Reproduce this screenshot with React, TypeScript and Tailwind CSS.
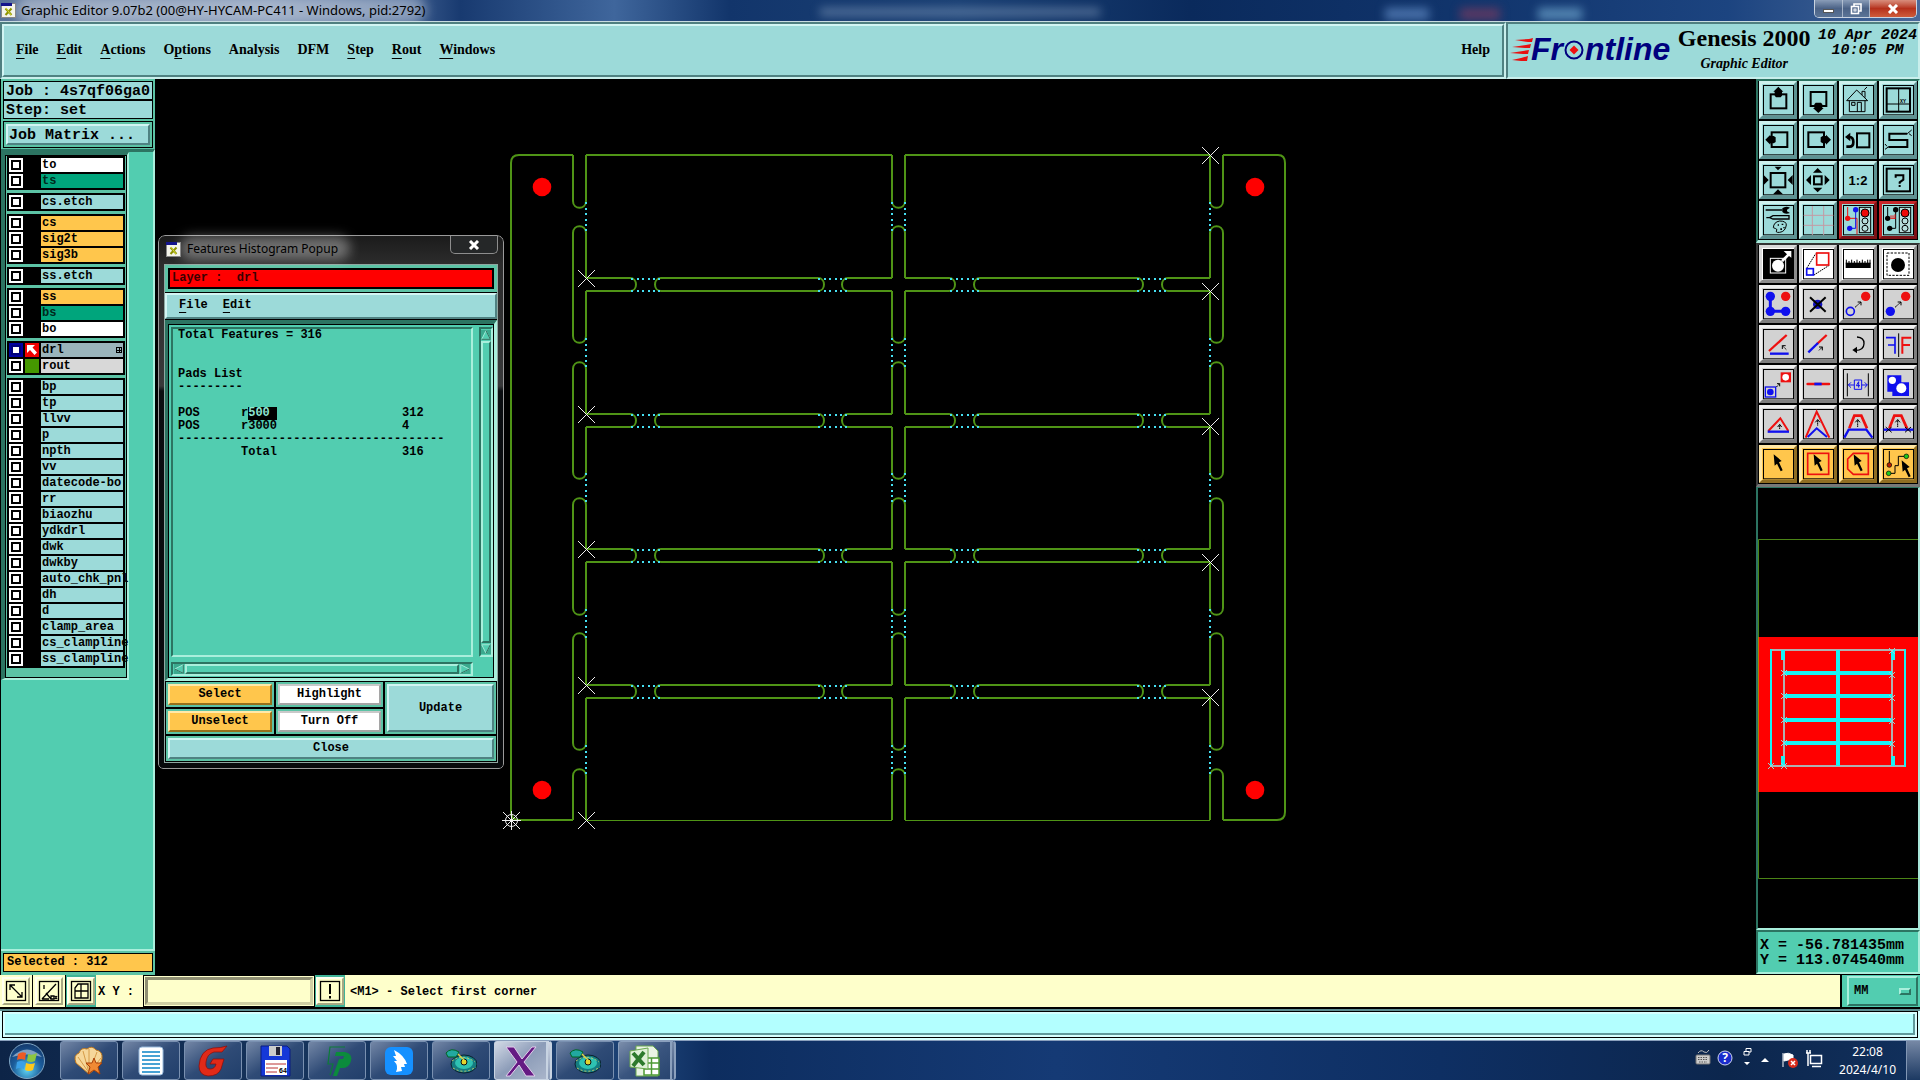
import React from "react";

const MONO = "font-['Liberation_Mono',monospace]";
const SERIF = "font-['Liberation_Serif',serif]";
const SANS = "font-['Noto_Sans',sans-serif]";

/* ---------- bevel styles ---------- */
const CYAN_UP = "border-2 border-t-[#d2f5f3] border-l-[#d2f5f3] border-r-[#4f8282] border-b-[#4f8282] bg-[#9cdad9]";
const GREEN_UP = "border-2 border-t-[#a9efdc] border-l-[#a9efdc] border-r-[#2c7462] border-b-[#2c7462] bg-[#52cdb0]";
const GREEN_DOWN = "border-2 border-t-[#2c7462] border-l-[#2c7462] border-r-[#a9efdc] border-b-[#a9efdc] bg-[#52cdb0]";

/* ---------- top ---------- */
function AppGlyph() {
  return (
    <svg viewBox="0 0 15 15" className="h-[15px] w-[15px] shrink-0">
      <rect x="0.5" y="0.5" width="14" height="14" fill="#f4f4ea" stroke="#888" />
      <rect x="0" y="0" width="11" height="3" fill="#14148c" />
      <path d="M4.500 5.500 L10.500 12 M10.500 5.500 L4.500 12" stroke="#8d9400" strokeWidth="2" />
      <path d="M5 5 L10 12" stroke="#e6e640" strokeWidth="0.8" />
    </svg>
  );
}

function TitleBar() {
  return (
    <div className="relative flex h-[22px] items-start overflow-hidden border-b border-[#c8dbe0] bg-[linear-gradient(90deg,#5a7399_0%,#6e86ab_14%,#3f5f90_21%,#183a70_24%,#3f669c_32%,#12356b_38%,#1b4175_50%,#0a2a5c_62%,#12366e_78%,#1c4480_90%,#49699a_100%)]">
      <div className="absolute -top-1 left-4 h-7 w-[410px] rounded-full bg-white/40 blur-[6px]" />
      <div className="absolute top-2 left-[820px] h-2 w-[280px] bg-[#9eb3cf]/45 blur-[5px]" />
      <div className="absolute top-2 left-[1385px] h-3 w-[44px] bg-[#6f9bd6]/60 blur-[5px]" />
      <div className="absolute top-2 left-[1460px] h-3 w-[40px] bg-[#7a3a60]/70 blur-[5px]" />
      <div className="absolute top-2 left-[1538px] h-3 w-[44px] bg-[#6fa6cf]/70 blur-[5px]" />
      <div className="relative flex h-5 items-center gap-[5px] pl-px">
        <AppGlyph />
        <h1 className={`${SANS} text-[13px] leading-4 whitespace-nowrap text-black`}>
          Graphic Editor 9.07b2 (00@HY-HYCAM-PC411 - Windows, pid:2792)
        </h1>
      </div>
      <div className="relative mr-[3px] ml-auto flex h-[18px] overflow-hidden rounded-b-[5px] border border-t-0 border-[#c9d3e0]">
        <button aria-label="Minimize" className="flex w-7 items-center justify-center border-r border-[#c9d3e0]/70 bg-gradient-to-b from-[#8a9db8] via-[#4b6286] to-[#5b7496]">
          <span className="mt-1 h-[4px] w-[11px] border border-[#555] bg-white" />
        </button>
        <button aria-label="Restore" className="flex w-[27px] items-center justify-center border-r border-[#c9d3e0]/70 bg-gradient-to-b from-[#8a9db8] via-[#4b6286] to-[#5b7496]">
          <svg viewBox="0 0 12 12" className="h-3 w-3" fill="none" stroke="#fff" strokeWidth="1.6">
            <path d="M4 3 V1 H11 V8 H9" />
            <rect x="1.500" y="3.500" width="7" height="7" />
            <rect x="4" y="6" width="2" height="2" strokeWidth="1" />
          </svg>
        </button>
        <button aria-label="Close window" className="flex w-[46px] items-center justify-center bg-gradient-to-b from-[#d88d7c] via-[#b5301b] to-[#cf5b3a]">
          <svg viewBox="0 0 12 10" className="h-[10px] w-3" stroke="#fff" strokeWidth="3">
            <path d="M2 1 L10 9 M10 1 L2 9" />
          </svg>
        </button>
      </div>
    </div>
  );
}

const MENUS: [string, string, string][] = [
  ["", "F", "ile"],
  ["", "E", "dit"],
  ["", "A", "ctions"],
  ["O", "p", "tions"],
  ["Analysis", "", ""],
  ["DFM", "", ""],
  ["", "S", "tep"],
  ["", "R", "out"],
  ["", "W", "indows"],
];

function MenuLabel({ parts }: { parts: [string, string, string] }) {
  return (
    <>
      {parts[0]}
      <span className="underline decoration-1 underline-offset-[4px]">{parts[1]}</span>
      {parts[2]}
    </>
  );
}

function Logo() {
  return (
    <div className="flex items-center text-[#00007e]" aria-label="Frontline">
      <svg viewBox="0 0 24 26" className="-mr-[3px] h-[26px] w-6" fill="#e81010">
        <path d="M5 4 L19 3 L23 2 L22 6 L18 6 Z M2 11 L16 9 L21 8 L20 12 L15 12 Z M0 17 L13 15 L19 14 L18 18 L13 18 Z M2 24 L11 22 L18 20 L17 25 L11 25 Z" />
      </svg>
      <div className="flex items-baseline font-['Liberation_Sans',sans-serif] text-[32px] leading-8 font-bold italic">
        <span>Fr</span>
        <svg viewBox="0 0 20 20" className="mx-px -mb-[2px] h-5 w-5">
          <circle cx="10" cy="10" r="8.500" fill="none" stroke="#00007e" strokeWidth="2" />
          <path d="M10 5.500 L14.500 10 L10 14.500 L5.500 10 Z" fill="#f01010" />
        </svg>
        <span>ntline</span>
      </div>
    </div>
  );
}

function Header() {
  const outer = "border-2 border-t-[#4f7f80] border-l-[#4f7f80] border-r-[#c9efec] border-b-[#c9efec]";
  const inner = "border-2 border-t-[#d2f5f3] border-l-[#d2f5f3] border-r-[#4f8282] border-b-[#4f8282]";
  return (
    <header className="flex h-[57px] bg-[#9cdad9]">
      <div className={`flex flex-1 ${outer}`}>
        <nav className={`flex flex-1 items-center gap-[18px] pr-3 pb-[2px] pl-3 ${inner} ${SERIF} text-[14px] font-bold`}>
          {MENUS.map((m, i) => (
            <button key={i} className="leading-5">
              <MenuLabel parts={m} />
            </button>
          ))}
          <button className="ml-auto leading-5">Help</button>
        </nav>
      </div>
      <div className={`flex w-[414px] shrink-0 items-start justify-between pr-px pl-[2px] ${outer}`}>
        <div className="pt-[9px]">
          <Logo />
        </div>
        <div className={`${SERIF} flex flex-col items-center font-bold`}>
          <span className="text-[24px] leading-7">Genesis 2000</span>
          <span className="pt-[2px] text-[14px] leading-5 italic">Graphic Editor</span>
        </div>
        <div className={`${MONO} pt-1 text-center text-[15px] leading-[15px] font-bold whitespace-pre italic`}>
          <div>10 Apr 2024</div>
          <div>10:05 PM</div>
        </div>
      </div>
    </header>
  );
}

/* ---------- left sidebar ---------- */
const LAYERS: { name: string; tone: string; kind?: string }[][] = [
  [{ name: "to", tone: "bg-white" }, { name: "ts", tone: "bg-[#00a57c]" }],
  [{ name: "cs.etch", tone: "bg-[#9cdad9]" }],
  [
    { name: "cs", tone: "bg-[#ffc64c]" },
    { name: "sig2t", tone: "bg-[#ffc64c]" },
    { name: "sig3b", tone: "bg-[#ffc64c]" },
  ],
  [{ name: "ss.etch", tone: "bg-[#9cdad9]" }],
  [
    { name: "ss", tone: "bg-[#ffc64c]" },
    { name: "bs", tone: "bg-[#00a57c]" },
    { name: "bo", tone: "bg-white" },
  ],
  [
    { name: "drl", tone: "bg-[#9ab4bb]", kind: "work" },
    { name: "rout", tone: "bg-[#d8d8d8]", kind: "shown" },
  ],
  ["bp", "tp", "llvv", "p", "npth", "vv", "datecode-bo", "rr", "biaozhu", "ydkdrl", "dwk", "dwkby", "auto_chk_pnl", "dh", "d", "clamp_area", "cs_clampline", "ss_clampline"].map((name) => ({
    name,
    tone: "bg-[#9cdad9]",
  })),
];

function LayerRow({ name, tone, kind }: { name: string; tone: string; kind?: string }) {
  return (
    <label className="flex h-4 items-center pt-0.5 pl-0.5">
      <input
        type="checkbox"
        className={
          kind === "work"
            ? "size-[14px] shrink-0 appearance-none border-2 border-[#0000a0] bg-white shadow-[inset_0_0_0_2px_#00007a]"
            : "size-[14px] shrink-0 appearance-none border-2 border-white bg-white shadow-[inset_0_0_0_2px_#000]"
        }
      />
      <span className="mx-0.5 flex size-[14px] shrink-0 items-center justify-center">
        {kind === "work" && (
          <svg viewBox="0 0 14 14" className="size-[14px]">
            <rect width="14" height="14" fill="#f00000" />
            <path d="M2 2 H10 L7.500 4.500 L12 9.500 L9.500 12 L5 7 L2 10 Z" fill="#fff" />
          </svg>
        )}
        {kind === "shown" && <span className="size-[14px] bg-[#459800]" />}
      </span>
      <span className={`${MONO} flex h-[14px] w-[82px] items-center pl-px text-[12px] leading-[14px] font-bold whitespace-nowrap ${tone} ${name === "bs" || name === "ts" ? "text-[#012a1c]" : "text-black"}`}>
        {name}
        {kind === "work" && (
          <svg viewBox="0 0 6 6" className="mr-px ml-auto size-[6px]" shapeRendering="crispEdges">
            <path d="M0.500 0.500 H5.500 V5.500 H0.500 Z M3 0 V6 M0 3 H6" fill="none" stroke="#000" />
          </svg>
        )}
      </span>
    </label>
  );
}

function Sidebar() {
  return (
    <aside className="flex w-[155px] shrink-0 flex-col border-l border-black bg-[#5cc3a5]">
      <div className={`${MONO} px-[2px] pt-[2px] text-[15px] font-bold`}>
        <div className="h-[19px] border border-black bg-[#9cdad9] pl-[2px] leading-[19px] whitespace-nowrap">Job : 4s7qf06ga0</div>
        <div className="h-[19px] border border-black bg-[#9cdad9] pl-[2px] leading-[19px]">Step: set</div>
        <div className="mt-[2px] border border-black p-[2px]">
          <button className={`block h-[21px] w-full pl-px text-left leading-[19px] ${CYAN_UP}`}>Job Matrix ...</button>
        </div>
      </div>
      <div className="mt-px flex flex-1 flex-col items-start border-t-[3px] border-r-2 border-b-2 border-t-[#2c7462] border-r-[#a9efdc] border-b-[#a9efdc] bg-[#52cdb0]">
        <div className="border-t-[3px] border-r-2 border-b-2 border-l-4 border-t-[#2c7462] border-r-[#a9efdc] border-b-[#a9efdc] border-l-[#2c7462]">
          <div className="flex w-[122px] flex-col gap-[3px] border border-black bg-[#5cc3a5] px-px pb-[9px]">
            {LAYERS.map((g, i) => (
              <div key={i} className="w-[118px] bg-black pb-0.5">
                {g.map((l) => (
                  <LayerRow key={l.name} {...l} />
                ))}
              </div>
            ))}
          </div>
        </div>
      </div>
      <div className="px-[2px] pt-[2px] pb-[3px]">
        <div className={`${MONO} h-[19px] border border-black bg-[#ffc64c] pl-[3px] text-[12px] leading-[17px] font-bold`}>Selected : 312</div>
      </div>
    </aside>
  );
}

/* ---------- board drawing ---------- */
const ROWS = [278, 414, 549, 685];
const COL_STARTS = [155, 226, 362, 498, 633, 769];
const COL_ENDS = [208, 343, 479, 615, 750, 820];

function slotPath(): string {
  const d: string[] = [];
  const n = COL_STARTS.length;
  const vertical = (x1: number, x2: number, openL: boolean, openR: boolean) => {
    for (let i = 0; i < n; i++) {
      const top = COL_STARTS[i];
      const bot = COL_ENDS[i];
      const a = i === 0 ? top : top + 7;
      const b = i === n - 1 ? bot : bot - 7;
      const side = (x: number, open: boolean) => {
        const row = i > 0 && i < n - 1 ? ROWS[i - 1] : null;
        if (open && row !== null) d.push(`M${x} ${a} V${row} M${x} ${row + 13} V${b}`);
        else d.push(`M${x} ${a} V${b}`);
      };
      side(x1, openL);
      side(x2, openR);
      if (i > 0) d.push(`M${x1} ${a} C${x1} ${top - 2} ${x2} ${top - 2} ${x2} ${a}`);
      if (i < n - 1) d.push(`M${x1} ${b} C${x1} ${bot + 2} ${x2} ${bot + 2} ${x2} ${b}`);
    }
  };
  vertical(573, 586, false, true);
  vertical(892, 905, true, true);
  vertical(1210, 1223, true, false);
  for (const y of ROWS) {
    for (const [x1, a, b, c, e, x2] of [
      [586, 636, 655, 824, 842, 892],
      [905, 955, 974, 1143, 1162, 1210],
    ]) {
      const y2 = y + 13;
      d.push(`M${x1} ${y} H${a - 6} C${a + 2} ${y} ${a + 2} ${y2} ${a - 6} ${y2} H${x1}`);
      d.push(`M${b + 6} ${y} H${c - 6} C${c + 2} ${y} ${c + 2} ${y2} ${c - 6} ${y2} H${b + 6} C${b - 2} ${y2} ${b - 2} ${y} ${b + 6} ${y}`);
      d.push(`M${x2} ${y} H${e + 6} C${e - 2} ${y} ${e - 2} ${y2} ${e + 6} ${y2} H${x2}`);
    }
  }
  return d.join(" ");
}

function dotList(): [number, number][] {
  const out: [number, number][] = [];
  const steps = [-14, -8, -3, 3, 8, 13];
  for (const cy of [217, 353, 488, 624, 760]) for (const x of [586, 892, 905, 1210]) for (const s of steps) out.push([x, cy + s]);
  for (const y of ROWS) for (const cx of [646, 833, 965, 1152]) for (const s of steps) out.push([cx + s, y + 1], [cx + s, y + 13]);
  return out;
}

const CROSSES = [
  [586, 278], [586, 414], [586, 549], [586, 685], [586, 820], [511, 820],
  [1210, 155], [1210, 291], [1210, 426], [1210, 562], [1210, 697],
];

function Board() {
  return (
    <svg viewBox="155 79 1602 896" className="h-[896px] w-[1602px] max-w-none" role="img" aria-label="Board outline">
      <g fill="none" stroke="#4f9416" strokeWidth="2">
        <path d={slotPath()} />
        <path d="M573 155 H519 Q511 155 511 163 V812 Q511 820 519 820 H573 M586 155 H892 M905 155 H1210 M1223 155 H1278 Q1285 155 1285 163 V812 Q1285 820 1277 820 H1223" />
        <path d="M586 820.500 H892 M905 820.500 H1210" strokeWidth="1" />
      </g>
      <g fill="#46e0f2">
        {dotList().map(([x, y], i) => (
          <rect key={i} x={x - 1} y={y - 1} width="2" height="2" />
        ))}
      </g>
      <g fill="#ff0000">
        {[[542, 187], [1255, 187], [542, 790], [1255, 790]].map(([x, y]) => (
          <circle key={`${x}-${y}`} cx={x} cy={y} r="9.300" />
        ))}
      </g>
      <g stroke="#f0f0f0" strokeWidth="1" fill="none">
        {CROSSES.map(([x, y]) => (
          <path key={`${x}-${y}`} d={`M${x - 8} ${y - 8} L${x + 9} ${y + 9} M${x + 9} ${y - 8} L${x - 8} ${y + 9}`} />
        ))}
        <circle cx="511.500" cy="820.500" r="6" />
        <path d="M502 820.500 H521 M511.500 811 V830" />
      </g>
    </svg>
  );
}

/* ---------- popup ---------- */
function Arrow({ dir }: { dir: "up" | "down" | "left" | "right" }) {
  const pts = { up: "7,1 13,13 1,13", down: "1,1 13,1 7,13", left: "1,7 13,1 13,13", right: "13,7 1,1 1,13" }[dir];
  return (
    <svg viewBox="0 0 14 14" className="h-full w-full" aria-hidden="true">
      <rect width="14" height="14" fill="#3ba98e" />
      <polygon points={pts} fill="#52cdb0" stroke="#a9efdc" strokeWidth="1.300" />
      <path d={dir === "up" ? "M1 13 H13 L7 1" : dir === "down" ? "M13 1 L7 13" : dir === "left" ? "M1 7 L13 13 V1" : "M13 7 L1 13"} fill="none" stroke="#236353" strokeWidth="1.300" />
    </svg>
  );
}

function PopupButton({ tone, children, tall }: { tone: "orange" | "white" | "cyan"; children: React.ReactNode; tall?: boolean }) {
  const tones = {
    orange: "border-t-[#ffe9a8] border-l-[#ffe9a8] border-r-[#97701a] border-b-[#97701a] bg-[#ffc64c]",
    white: "border-t-[#c9c9c9] border-l-[#c9c9c9] border-r-[#a5a5a5] border-b-[#a5a5a5] bg-white",
    cyan: "border-t-[#d2f5f3] border-l-[#d2f5f3] border-r-[#4f8282] border-b-[#4f8282] bg-[#9cdad9]",
  };
  return (
    <div className={`border border-black bg-[#5cc3a5] p-[2px] ${tall ? "row-span-2" : ""}`}>
      <button className={`block h-full min-h-[21px] w-full border-2 text-[12px] leading-[17px] font-bold ${tones[tone]}`}>{children}</button>
    </div>
  );
}

function Popup() {
  return (
    <section aria-label="Features Histogram Popup" className="absolute top-[156px] left-[3px] w-[346px] rounded-t-[7px] rounded-b-[5px] border border-[#9a9a9a] bg-[linear-gradient(180deg,#1b1b1b_0,#2c2c2c_28px,#38393a_150px,#0a0d10_155px,#080a0c_100%)] px-[5px] pb-[5px] outline outline-1 outline-black">
      <div className="relative flex h-[28px] items-start pt-[5px] pl-[2px]">
        <div className="absolute top-0 left-4 h-6 w-[170px] rounded-full bg-white/35 blur-[6px]" />
        <div className="relative flex items-center gap-[6px]">
          <AppGlyph />
          <h2 className={`${SANS} text-[12px] leading-4 text-black`}>Features Histogram Popup</h2>
        </div>
        <button aria-label="Close popup" className="absolute top-0 right-0 flex h-[18px] w-[48px] items-center justify-center rounded-b-[5px] border border-t-0 border-[#8d8d8d] bg-[#252728]">
          <svg viewBox="0 0 12 10" className="h-[10px] w-3" stroke="#fff" strokeWidth="3">
            <path d="M2 1 L10 9 M10 1 L2 9" />
          </svg>
        </button>
      </div>
      <div className={`${MONO} border border-[#8fa7a1] bg-black`}>
        <div className="bg-[#5cc3a5] p-[3px]">
          <div className="h-[21px] border-2 border-black bg-[#ff0000] pl-[2px] text-[12px] leading-[17px] font-bold whitespace-pre text-[#3a0000]">Layer :  drl</div>
        </div>
        <div className={`mt-px flex h-[26px] items-center gap-[15px] pb-[2px] pl-3 text-[12px] font-bold ${CYAN_UP}`}>
          <button><MenuLabel parts={["", "F", "ile"]} /></button>
          <button><MenuLabel parts={["", "E", "dit"]} /></button>
        </div>
        <div className="mt-px border-t-4 border-r-[3px] border-b-[3px] border-l-[3px] border-t-[#2c7462] border-r-[#a9efdc] border-b-[#a9efdc] border-l-[#2c7462] bg-[#52cdb0]">
          <div className="grid grid-cols-[1fr_14px] grid-rows-[330px_14px] gap-x-[6px] gap-y-[5px] border border-black pt-[2px] pb-px pl-[2px]">
            <div className={`${GREEN_DOWN} pl-[5px] text-[12px] leading-[13px] font-bold`}>
              <table className="w-full table-fixed border-collapse">
                <caption className="h-[65px] text-left whitespace-pre">{"Total Features = 316\n\n\nPads List\n---------"}</caption>
                <colgroup>
                  <col className="w-[63px]" />
                  <col className="w-[161px]" />
                  <col />
                </colgroup>
                <tbody>
                  <tr className="h-[13px]"><td /></tr>
                  <tr>
                    <td>POS</td>
                    <td>r<span className="inline-block h-[13px] w-[29px] bg-black text-[#8fe6d2]">500</span></td>
                    <td>312</td>
                  </tr>
                  <tr><td>POS</td><td>r3000</td><td>4</td></tr>
                  <tr><td colSpan={3} className="overflow-hidden whitespace-nowrap">-------------------------------------</td></tr>
                  <tr><td /><td>Total</td><td>316</td></tr>
                </tbody>
              </table>
            </div>
            <div className={`flex flex-col ${GREEN_DOWN}`}>
              <div className="h-[12px]"><Arrow dir="up" /></div>
              <div className={`flex-1 ${GREEN_UP}`} />
              <div className="h-[12px]"><Arrow dir="down" /></div>
            </div>
            <div className={`flex ${GREEN_DOWN}`}>
              <div className="w-[12px]"><Arrow dir="left" /></div>
              <div className={`flex-1 ${GREEN_UP}`} />
              <div className="w-[12px]"><Arrow dir="right" /></div>
            </div>
          </div>
        </div>
        <div className="grid grid-cols-[110px_109px_1fr]">
          <PopupButton tone="orange">Select</PopupButton>
          <PopupButton tone="white">Highlight</PopupButton>
          <PopupButton tone="cyan" tall>Update</PopupButton>
          <PopupButton tone="orange">Unselect</PopupButton>
          <PopupButton tone="white">Turn Off</PopupButton>
        </div>
        <PopupButton tone="cyan">Close</PopupButton>
      </div>
    </section>
  );
}

/* ---------- toolbar icons (114-unit grid) ---------- */
const K = { fill: "none", stroke: "#000", strokeWidth: 6 } as const;
const R = { fill: "none", stroke: "#ee1010", strokeWidth: 6 } as const;
const B = { fill: "none", stroke: "#1010ee", strokeWidth: 6 } as const;
const Pointer = ({ x = 0, y = 0 }: { x?: number; y?: number }) => (
  <path transform={`translate(${x} ${y})`} d="M44 28 L68 48 L60 52 L71 76 L65 79 L54 56 L47 62 Z" fill="#000" />
);
const SmallArrow = ({ d, head }: { d: string; head: string }) => (
  <g fill="none" stroke="#000" strokeWidth="3">
    <path d={d} strokeDasharray="4 1" />
    <path d={head} />
  </g>
);
const Light = ({ x }: { x: number }) => (
  <g stroke="#000" strokeWidth="3">
    <rect x={x} y="19" width="34" height="76" fill="#b9dedd" />
    <circle cx={x + 17} cy="36" r="12" fill="#f00808" />
    <circle cx={x + 17} cy="60" r="9" fill="none" />
    <circle cx={x + 17} cy="82" r="9" fill="none" />
  </g>
);

const NAV_ICONS: [string, React.ReactNode][] = [
  ["Page up", <><rect x="35" y="40" width="47" height="42" {...K} /><path d="M58 17 L73 32 H69 V44 L65 49 H51 L47 44 V32 H43 Z" /></>],
  ["Page down", <><rect x="35" y="33" width="47" height="42" {...K} /><path d="M58 96 L42 81 H46 V70 L50 65 H66 L70 70 V81 H74 Z" /></>],
  ["Home", <><path d="M23 59 L53 27 L86 59 Z M31 59 V92 H78 V59 M38 64 H48 V73 H38 Z M55 92 V64 H67 V92 M69 42 V31 H78 V50 M76 26 L84 18" {...K} strokeWidth="3" /></>],
  ["Origin", <><rect x="23" y="22" width="70" height="70" {...K} /><path d="M59 22 V92 M23 69 H93" {...K} strokeWidth="3" /><text x="63" y="67" fontSize="15" fontFamily="Liberation Mono, monospace" fontWeight="700">XY</text></>],
  ["Pan left", <><rect x="38" y="34" width="47" height="44" {...K} /><path d="M19 56 L34 41 V45 H44 L50 49 V63 L44 67 H34 V71 Z" /></>],
  ["Pan right", <><rect x="28" y="34" width="47" height="44" {...K} /><path d="M96 56 L81 41 V45 H71 L65 49 V63 L71 67 H81 V71 Z" /></>],
  ["Previous view", <><rect x="54" y="37" width="37" height="42" {...K} /><path d="M22 77 H32 Q43 77 43 63 Q43 49 32 48 H26" {...K} strokeWidth="8" /><path d="M18 48 L34 35 V61 Z" /></>],
  ["Path", <><path d="M85 38 H31 V57 H85 V78 H28" {...K} /><path d="M85 38 L98 27 M90 38 L98 44 M28 78 L18 85 M24 76 L18 69" {...K} strokeWidth="3" /></>],
  ["Zoom out", <><rect x="35" y="36" width="44" height="43" {...K} /><path d="M47 17 H68 L57 28 Z M57 85 L72 100 H42 Z M14 42 L29 57 L14 72 Z M101 42 L86 57 L101 72 Z" /></>],
  ["Zoom in", <><rect x="45" y="46" width="23" height="24" {...K} /><path d="M56 21 L70 35 H42 Z M42 80 H70 L56 94 Z M21 57 L36 42 V72 Z M92 57 L77 42 V72 Z" /></>],
  ["Scale one to two", <text x="57" y="72" textAnchor="middle" fontSize="39" fontFamily="Liberation Sans, sans-serif" fontWeight="700">1:2</text>],
  ["Help on tool", <><rect x="23" y="23" width="70" height="68" {...K} /><path d="M50 50 V43 H73 V56 L62 64 V68 M62 72 V78" {...K} /></>],
  ["Settings", <><path d="M20 27 H70 M22 50 H32 L42 44 H90 V54 H42 L32 50" {...K} strokeWidth="4" /><path d="M70 22 Q80 13 93 20 L84 26 V31 L93 36 Q78 42 70 33 Z" /><path d="M43 80 Q44 63 62 60 Q82 60 82 72 Q79 92 62 94 Q47 96 54 86 Q50 82 43 80 Z" {...K} strokeWidth="3" /><path d="M56 70 h4 v4 h-4 z M68 68 h5 v4 h-5 z M64 82 h5 v5 h-5 z M73 78 h4 v4 h-4 z" /></>],
  ["Grid", <path d="M40 15 V102 M74 15 V102 M14 43 H103 M14 73 H103" fill="none" stroke="#c49aa4" strokeWidth="3" />],
  ["Net display", <><path d="M26 18 V52 H54 V100" {...R} strokeWidth="3" /><path d="M50 26 V82 H32" {...B} strokeWidth="3" /><circle cx="50" cy="26" r="8" fill="#1010ee" /><circle cx="32" cy="82" r="8" fill="#1010ee" /><circle cx="26" cy="52" r="8" fill="#ee1010" /><Light x={61} /></>],
  ["Net check", <><path d="M26 18 V52 M50 26 V82 H32" {...K} strokeWidth="3" /><circle cx="50" cy="26" r="8" /><circle cx="32" cy="82" r="8" /><circle cx="26" cy="52" r="8" /><path d="M34 52 H48 M36 43 V50 M42 43 V50 M48 40 V54" {...R} strokeWidth="3" /><Light x={61} /></>],
];

const EDIT_ICONS: [string, React.ReactNode][] = [
  ["Feature", <><rect x="14" y="15" width="89" height="87" /><rect x="34" y="40" width="46" height="44" fill="#000" stroke="#fff" strokeWidth="3" /><circle cx="57" cy="62" r="18" fill="#fff" /><path d="M66 46 L84 28 L74 18 H97 V38 L90 33 L72 51 Z" fill="#fff" /></>],
  ["Scale feature", <><path d="M23 70 L50 26 M45 90 L92 60" {...K} strokeWidth="3" strokeDasharray="5 2" /><rect x="53" y="24" width="36" height="36" {...R} strokeWidth="5" /><rect x="23" y="71" width="20" height="19" {...B} strokeWidth="5" /></>],
  ["Measure", <><path d="M20 53 H95 V69 H20 Z" /><path d="M22 56 V44 M30 56 V48 M38 56 V44 M46 56 V48 M54 56 V44 M62 56 V48 M70 56 V44 M78 56 V48 M86 56 V44 M93 56 V44" {...K} strokeWidth="3" /></>],
  ["Pad select", <><rect x="24" y="24" width="66" height="67" {...K} strokeWidth="3" strokeDasharray="7 4" /><circle cx="57" cy="60" r="21" /></>],
  ["Connect", <><path d="M34 36 V79 H80" {...B} strokeWidth="9" /><circle cx="34" cy="34" r="14" fill="#1010ee" /><circle cx="34" cy="79" r="14" fill="#1010ee" /><circle cx="80" cy="79" r="14" fill="#1010ee" /><circle cx="80" cy="34" r="14" fill="#ee1010" /></>],
  ["Delete", <><circle cx="56" cy="58" r="14" fill="#1010c0" /><path d="M33 37 L80 80 M80 37 L33 80" {...K} strokeWidth="6" /></>],
  ["Move", <><circle cx="80" cy="34" r="14" fill="#ee1010" /><circle cx="34" cy="79" r="12" {...B} strokeWidth="5" /><SmallArrow d="M48 67 L66 51" head="M56 51 H66 V61" /></>],
  ["Copy", <><circle cx="80" cy="34" r="14" fill="#ee1010" /><circle cx="34" cy="79" r="14" fill="#1010ee" /><SmallArrow d="M48 67 L66 51" head="M56 51 H66 V61" /></>],
  ["Rotate line", <><path d="M30 78 L83 30" {...R} strokeWidth="7" /><path d="M33 86 H89" {...B} strokeWidth="7" /><SmallArrow d="M82 74 L70 62" head="M70 72 V62 H80" /></>],
  ["Extend line", <><path d="M54 57 L83 30" {...R} strokeWidth="7" /><path d="M28 82 L57 54" {...B} strokeWidth="7" /><SmallArrow d="M60 76 L70 66" head="M60 66 H70 V76" /></>],
  ["Rotate", <><path d="M54 36 Q76 38 75 56 Q74 76 50 76" {...K} strokeWidth="4" /><path d="M40 75 L54 65 V85 Z" /></>],
  ["Mirror", <><path d="M21 38 H48 V86 M27 60 H48" {...B} strokeWidth="5" /><path d="M97 38 H70 V86 M70 60 H93" {...R} strokeWidth="6" /><path d="M59 25 V96" {...K} strokeWidth="3" /></>],
  ["Change symbol", <><rect x="65" y="22" width="31" height="30" fill="#ee1010" /><circle cx="80" cy="37" r="10" fill="#fff" /><rect x="19" y="66" width="31" height="30" fill="none" stroke="#1010ee" strokeWidth="4" /><circle cx="34" cy="81" r="10" fill="#1010ee" /><SmallArrow d="M52 66 L62 56" head="M54 56 H62 V64" /></>],
  ["Break", <><path d="M26 57 H90" {...R} strokeWidth="8" strokeLinecap="round" /><path d="M46 57 H68" {...B} strokeWidth="8" /></>],
  ["Spacing", <><path d="M25 25 V94 M88 25 V94" {...K} strokeWidth="3" /><path d="M28 60 H45 M68 60 H85 M36 52 L28 60 L36 68 M77 52 L85 60 L77 68 M46 45 H68 V73 H46 Z" {...B} strokeWidth="3" /><path d="M59 68 V50 L52 62 H63" {...B} strokeWidth="3" /></>],
  ["Merge", <><path d="M25 31 H67 V52 H90 V93 H40 V80 H25 Z" fill="#1010ee" /><circle cx="40" cy="46" r="11" fill="#fff" /><circle cx="67" cy="70" r="15" fill="#fff" /></>],
  ["Triangle", <><path d="M28 78 L64 40 L88 78" {...R} /><path d="M26 80 H90" {...B} strokeWidth="7" /><SmallArrow d="M62 72 V60" head="M56 66 L62 58 L68 66" /></>],
  ["Tall triangle", <><path d="M20 98 L53 20 L91 98" {...R} /><path d="M26 96 L53 70 L84 96" {...B} /><SmallArrow d="M56 62 V44" head="M49 52 L56 44 L63 52" /></>],
  ["Trapezoid", <><path d="M31 70 L46 32 H67 L84 70" {...R} strokeWidth="8" /><path d="M16 98 L29 74 H82 L100 98" {...B} strokeWidth="7" /><SmallArrow d="M56 66 V44" head="M49 52 L56 44 L63 52" /></>],
  ["Trapezoid cut", <><path d="M31 70 L46 32 H67 L84 70" {...R} strokeWidth="8" /><path d="M14 74 H103" {...B} strokeWidth="7" /><path d="M20 66 L38 82 M38 66 L20 82 M78 66 L96 82 M96 66 L78 82" {...K} strokeWidth="3" /><SmallArrow d="M56 66 V44" head="M49 52 L56 44 L63 52" /></>],
];

const SELECT_ICONS: [string, React.ReactNode][] = [
  ["Select", <Pointer />],
  ["Select rectangle", <><rect x="26" y="25" width="63" height="63" {...R} strokeWidth="5" /><Pointer /></>],
  ["Select polygon", <><path d="M43 25 H88 V88 H43 L26 72 V42 Z" {...R} strokeWidth="5" /><Pointer /></>],
  ["Select net", <><path d="M31 18 V60 M28 85 H48 V62 H58 V34 H82" {...K} strokeWidth="3" /><circle cx="31" cy="60" r="7" fill="#b52000" stroke="#000" strokeWidth="2" /><circle cx="29" cy="85" r="7" fill="#1cc81c" stroke="#000" strokeWidth="2" /><circle cx="82" cy="34" r="7" fill="#1cc81c" stroke="#000" strokeWidth="2" /><Pointer x={24} y={18} /></>],
];

const TOOL_TONES = {
  cyan: "border-t-[#cdf1ee] border-l-[#cdf1ee] border-r-[#5d9292] border-b-[#5d9292] bg-[#9cdad9]",
  red: "border-t-[#c8262a] border-l-[#c8262a] border-r-[#7e1216] border-b-[#7e1216] bg-[#9cdad9]",
  white: "border-t-[#d9d9d9] border-l-[#d9d9d9] border-r-[#8b8b8b] border-b-[#8b8b8b] bg-white",
  gray: "border-t-[#f0f0f0] border-l-[#f0f0f0] border-r-[#7e7e7e] border-b-[#7e7e7e] bg-[#d2d2d2]",
  orange: "border-t-[#ffe7a6] border-l-[#ffe7a6] border-r-[#8f6d22] border-b-[#8f6d22] bg-[#ffc64c]",
};

function Tool({ label, tone, children }: { label: string; tone: keyof typeof TOOL_TONES; children: React.ReactNode }) {
  return (
    <button aria-label={label} title={label} className={`size-[38px] border-[3px] ${TOOL_TONES[tone]}`}>
      <svg viewBox="9 9 96 96" className="size-8" aria-hidden="true">
        <rect x="13.500" y="13.500" width="90" height="88" fill="none" stroke="#000" strokeWidth="3" />
        {children}
      </svg>
    </button>
  );
}

/* ---------- overview ---------- */
function Overview() {
  const marks = [
    [98, 673], [98, 696], [98, 720], [98, 743], [98, 766], [85, 766],
    [206, 651], [206, 675], [206, 698], [206, 721], [206, 744],
  ];
  return (
    <svg viewBox="1758 488 160 439" className="block w-full flex-1 bg-black" preserveAspectRatio="xMidYMin meet" role="img" aria-label="Overview">
      <path d="M1918 539.500 H1758.500 V878.500 H1918" fill="none" stroke="#4b8416" />
      <rect x="1758" y="637" width="160" height="155" fill="#ff0000" />
      <path d="M1758.500 637 V792" stroke="#b08000" />
      <g stroke="#b0b0b0" strokeWidth="2">
        <path d="M1770 650 H1906 M1770 766 H1906 M1784 650 V766 M1892 650 V766" />
      </g>
      <g stroke="#19f3f5">
        <path d="M1771 649 V767 M1905 649 V767" strokeWidth="2" />
        <path d="M1783 650 V660 M1893 650 V660 M1783 756 V766 M1893 756 V766" strokeWidth="4" />
        <path d="M1838 650 V766 M1784 673 H1892 M1784 696 H1892 M1784 720 H1892 M1784 743 H1892" strokeWidth="4" />
      </g>
      <g stroke="#8fd8d8" strokeWidth="1">
        {marks.map(([x, y]) => (
          <path key={`${x}-${y}`} d={`M${x + 1683} ${y - 3} l6 6 m0 -6 l-6 6`} />
        ))}
      </g>
    </svg>
  );
}

function RightPanel() {
  return (
    <aside className="flex w-[164px] shrink-0 flex-col bg-black">
      <div className="border-t-2 border-r-2 border-b-[3px] border-l-2 border-t-[#2c7462] border-r-[#a9efdc] border-b-[#a9e6da] border-l-[#2c7462]">
        <div className="grid grid-cols-[repeat(4,38px)] gap-[2px] pb-px pl-px">
          {NAV_ICONS.map(([label, icon], i) => (
            <Tool key={label} label={label} tone={i > 13 ? "red" : "cyan"}>{icon}</Tool>
          ))}
        </div>
      </div>
      <div className="border-t-2 border-r-2 border-b-[3px] border-l-2 border-t-[#333] border-r-[#777] border-b-[#777] border-l-[#3c3c3c]">
        <div className="grid grid-cols-[repeat(4,38px)] gap-[2px] pb-px pl-px">
          {EDIT_ICONS.map(([label, icon], i) => (
            <Tool key={label} label={label} tone={i < 4 ? "white" : "gray"}>{icon}</Tool>
          ))}
          {SELECT_ICONS.map(([label, icon]) => (
            <Tool key={label} label={label} tone="orange">{icon}</Tool>
          ))}
        </div>
      </div>
      <div className="flex flex-1 border-t border-r-2 border-b-2 border-l-2 border-t-[#2c7462] border-r-[#a9e6da] border-b-[#a9efdc] border-l-[#2c7462]">
        <Overview />
      </div>
      <div className={`${MONO} ${GREEN_DOWN} mb-px h-[44px] pt-[6px] pl-[2px] text-[15px] leading-[15px] font-bold whitespace-pre`}>
        <div>X = -56.781435mm</div>
        <div>Y = 113.074540mm</div>
      </div>
    </aside>
  );
}

/* ---------- bottom ---------- */
function SmallTool({ label, children, green }: { label: string; children: React.ReactNode; green?: boolean }) {
  return (
    <div className={`flex items-center justify-center ${green ? "bg-[#3fb497] px-px" : "border-r border-black px-[2px]"}`}>
      <button aria-label={label} className="size-[28px] border-2 border-t-[#fffff0] border-r-[#a8a884] border-b-[#a8a884] border-l-[#fffff0] bg-[#feffcb]">
        <svg viewBox="0 0 24 24" className="size-6" fill="none" stroke="#000" strokeWidth="1.300">
          <rect x="2.500" y="2.500" width="19" height="19" />
          {children}
        </svg>
      </button>
    </div>
  );
}

function StatusBar() {
  return (
    <div className={`${MONO} flex h-[34px] border-b-2 border-black bg-[#feffcb] text-[12px] font-bold`}>
      <SmallTool label="Snap diagonal"><path d="M6 6 L18 18 M6 11 V6 H11 M13 18 H18 V13" /></SmallTool>
      <SmallTool label="Snap angle"><path d="M5 20 L19 5 M5 20 H12 M7 6 V10 M9 14 L14 20 M14 17 h3 v3 h-3 z M18 17 l2 3 M20 17 l-2 3" /></SmallTool>
      <SmallTool label="Snap grid" green><path d="M6 9 L9 5 H19 V19 H6 Z M12 5 V19 M6 12 H19" /></SmallTool>
      <label htmlFor="xy" className="flex items-center pt-px pr-[9px] pl-[2px] leading-4 whitespace-pre">X Y :</label>
      <div className="border border-black p-px">
        <input id="xy" type="text" className="h-full w-[168px] border-[3px] border-t-[#8f8f72] border-r-[#cfcfa4] border-b-[#cfcfa4] border-l-[#8f8f72] bg-[#feffcb] px-1 outline-none" />
      </div>
      <SmallTool label="Attention" green><path d="M12 5 V15 M12 17 V19.500" strokeWidth="2" /></SmallTool>
      <div className="flex flex-1 items-center pt-px pl-[5px] leading-4 whitespace-pre">{"<M1> - Select first corner"}</div>
      <div className="flex w-[80px] border-l-2 border-black bg-[#52cdb0] py-px pr-[2px] pl-[5px]">
        <button className={`flex flex-1 items-center justify-between px-[5px] ${GREEN_UP}`}>
          MM
          <span className={`h-[7px] w-3 ${GREEN_UP}`} />
        </button>
      </div>
    </div>
  );
}

const task: Record<string, React.ReactNode> = {
  Shell: <><path d="M16 29 L3 18 Q0 10 6 8 Q8 2 14 4 Q19 0 23 5 Q30 6 29 14 L27 20 Z" fill="#f6d79a" stroke="#c07a20" /><path d="M16 28 L5 12 M16 28 L10 6 M16 28 L16 4 M16 28 L24 7 M16 28 L28 13" stroke="#d69c48" strokeWidth="1" fill="none" /><path d="M21 13 L23 18 L29 18 L25 22 L27 29 L21 25 L15 29 L17 22 L13 18 L19 18 Z" fill="#f08a34" stroke="#a84008" /></>,
  Notes: <><rect x="4" y="2" width="24" height="28" rx="3" fill="#fff" stroke="#9bd" /><path d="M7 7 H25 M7 11 H25 M7 15 H25 M7 19 H25 M7 23 H25 M7 27 H25" stroke="#0d84c6" strokeWidth="1.700" /></>,
  Gerber: <path d="M30 1 L25 7 H17 Q10 9 9 17 Q8 24 13 24 Q18 24 19 19 H13 L16 14 H27 L24 24 Q21 31 11 31 Q2 30 2 21 Q3 5 16 3 Q24 3 30 1 Z" fill="#e12a18" stroke="#8c0c08" strokeWidth="0.700" />,
  Disk: <><path d="M2 1 H28 L31 4 V31 H2 Z" fill="#1538d8" stroke="#0a1c80" /><rect x="10" y="1" width="13" height="10" fill="#ccc" /><rect x="17" y="2" width="4" height="8" fill="#223" /><rect x="6" y="15" width="22" height="15" fill="#fff" /><path d="M7 19 H27 M7 23 H19 M7 27 H18" stroke="#b33" /><text x="20" y="28" fontSize="7" fontWeight="700" fill="#000" fontFamily="Liberation Sans, sans-serif">64</text></>,
  Polar: <><path d="M24 2 H9 L7 19 H12 L9 30" stroke="#0c7c38" strokeWidth="1.200" fill="none" /><path d="M15 7 H24 Q32 9 30 16 Q28 24 19 23 L16 31 H12 L18 14 H22 L23 11 H14 Z" fill="#0b8b3c" /></>,
  Wing: <><rect x="2" y="2" width="28" height="28" rx="6" fill="#1590ff" /><path d="M11 5 Q21 10 24 19 L21 19 L22 22 L18 22 L19 26 L13 27 Q16 21 11 16 L14 16 L10 11 L13 11 Z" fill="#fff" /></>,
  Genesis: <><ellipse cx="19" cy="19" rx="13" ry="9" fill="#157c80" stroke="#0a2230" /><ellipse cx="19" cy="18" rx="9" ry="6" fill="#2ec2b2" /><circle cx="19" cy="17" r="3" fill="#e4d32d" stroke="#111" /><path d="M7 16 Q18 8 30 17 M8 23 Q19 30 31 22" stroke="#c8c86a" fill="none" strokeDasharray="2 2" /><path d="M1 8 Q6 2 14 7 L11 12 H3 Z" fill="#22a9a0" stroke="#062" /><path d="M13 9 L19 15" stroke="#ded44a" strokeWidth="1.500" /></>,
  Exceed: <path d="M1 2 H9 L17 14 L27 2 H31 L19 17 L30 31 H21 L14 20 L5 31 H1 L12 17 Z" fill="#651a83" stroke="#e2cdec" strokeWidth="1" />,
  Excel: <><path d="M7 1 H24 L29 6 V31 H7 Z" fill="#e9f4e4" stroke="#6aa84f" /><rect x="15" y="13" width="15" height="17" fill="#fff" stroke="#4d9a35" strokeWidth="1.500" /><path d="M15 18 H30 M15 24 H30 M22.500 13 V30" stroke="#4d9a35" strokeWidth="1.500" /><path d="M1 6 L19 3 V24 L1 22 Z" fill="#dff0d8" stroke="#6aa84f" /><path d="M4 8 L15 20 M15 7 L4 21" stroke="#2d7a2d" strokeWidth="4" /></>,
};
const TASKS = ["Shell", "Notes", "Gerber", "Disk", "Polar", "Wing", "Genesis", "Exceed", "Genesis", "Excel"];

function Taskbar() {
  return (
    <footer className={`${SANS} flex h-10 items-stretch border-t border-[#8aa0bd] bg-[linear-gradient(90deg,#0d2447_0%,#17365f_18%,#1d4276_34%,#0d2d5f_37%,#153a75_55%,#0e2f63_75%,#0c264d_90%,#11305c_100%)] pl-2`}>
      <button aria-label="Start" className="w-[38px]">
        <svg viewBox="0 0 38 38" className="h-[38px] w-[38px]">
          <defs>
            <radialGradient id="orb" cx="50%" cy="75%" r="75%">
              <stop offset="0" stopColor="#5fd5f5" />
              <stop offset="0.550" stopColor="#1b5c9b" />
              <stop offset="1" stopColor="#14386b" />
            </radialGradient>
          </defs>
          <circle cx="19" cy="19" r="17.500" fill="url(#orb)" stroke="#7fa6c4" />
          <path d="M4 15 Q19 0 34 15 Q19 10 4 15 Z" fill="#fff" opacity="0.450" />
          <path d="M10 12 Q14 9 18 11 L17 18 Q13 16 9 18 Z" fill="#ee5a24" />
          <path d="M20 12 Q24 14 29 11 L27 19 Q23 21 19 19 Z" fill="#8cc63f" />
          <path d="M9 20 Q13 18 17 20 L16 27 Q12 25 8 27 Z" fill="#3aa0e8" />
          <path d="M18 21 Q23 23 27 21 L25 28 Q21 30 17 28 Z" fill="#fdc81b" />
        </svg>
      </button>
      <div className="ml-[14px] flex gap-1">
        {TASKS.map((t, i) => (
          <button
            key={i}
            aria-label={t}
            className={`flex w-[58px] items-center justify-center rounded-[3px] border ${
              t === "Exceed"
                ? "border-r-[6px] border-double border-[#c7d3e2] bg-gradient-to-br from-[#d3dae6] via-[#8c9cb8] to-[#a9b5ca]"
                : t === "Excel"
                  ? "border-r-[6px] border-double border-[#8ba0bd] bg-gradient-to-br from-[#7c8eab] via-[#3a557f] to-[#28456f]"
                  : "border-[#7990b0] bg-gradient-to-br from-[#7487a6] via-[#2f4b76] to-[#213f6b]"
            }`}
          >
            <svg viewBox="0 0 32 32" className="size-8">{task[t]}</svg>
          </button>
        ))}
      </div>
      <div className="ml-auto flex items-center text-white">
        <svg viewBox="0 0 128 32" className="h-8 w-[128px]" aria-hidden="true">
          <path d="M3 8 Q6 4 9 7 Q12 9 14 5" fill="none" stroke="#bbb" />
          <rect x="1" y="10" width="14" height="9" rx="1" fill="#ccc" stroke="#777" />
          <path d="M3 12.500 H13 M3 14.500 H13 M4 17 H12" stroke="#555" strokeDasharray="1.500 1" />
          <circle cx="30" cy="13" r="7" fill="#1a2ccc" stroke="#cfd6ee" />
          <text x="30" y="17" textAnchor="middle" fontSize="12" fontWeight="700" fill="#fff">?</text>
          <path d="M49 6.500 H54 V10 H49 Z M51 6 V3.500 H56 V7 H54" fill="none" stroke="#fff" />
          <path d="M49 17 h6 l-3 3 z M66 17 h8 l-4 -4 z" fill="#fff" />
          <path d="M88 8 V22 M89 9 Q93 7 98 10 V16 Q93 14 89 16 Z" fill="#fff" stroke="#fff" />
          <circle cx="98" cy="18" r="5" fill="#d62a1c" />
          <path d="M96 16 l4 4 m0 -4 l-4 4" stroke="#fff" strokeWidth="1.500" />
          <rect x="115.500" y="10.500" width="11" height="8" fill="#14305c" stroke="#fff" strokeWidth="1.500" />
          <path d="M117 21.500 H126 M113 8 V21 M111 8 H116 M112 5 V8 M115 5 V8" stroke="#fff" strokeWidth="1.500" />
        </svg>
        <div className="mr-[10px] ml-4 text-center text-[12px] leading-[18px]">
          <div>22:08</div>
          <div>2024/4/10</div>
        </div>
        <button aria-label="Show desktop" className="h-full w-[14px] border-l border-[#8196b4] bg-gradient-to-b from-[#7688a5] to-[#1c3962]" />
      </div>
    </footer>
  );
}

export default function App() {
  return (
    <div className="flex min-h-screen flex-col overflow-x-hidden bg-black text-black">
      <TitleBar />
      <Header />
      <main className="flex flex-1">
        <Sidebar />
        <div className="relative min-w-0 flex-1 overflow-hidden bg-black">
          <Board />
          <Popup />
        </div>
        <RightPanel />
      </main>
      <StatusBar />
      <div className="h-[31px] border-t-2 border-[#5f8f92] bg-[#d6ffff] px-[2px] pb-[2px]">
        <div className="h-full border border-black bg-[#d6ffff] p-[2px]">
          <div className="h-full border-r-2 border-b-2 border-[#5f9a9c] bg-[#b3ffff]" />
        </div>
      </div>
      <Taskbar />
    </div>
  );
}
